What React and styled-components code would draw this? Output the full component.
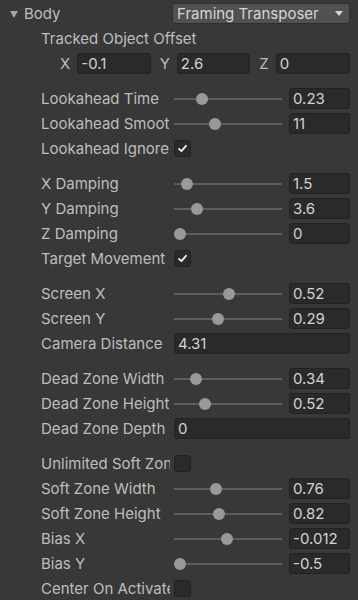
import React from "react";
import styled, { createGlobalStyle } from "styled-components";

const GlobalStyle = createGlobalStyle`
  html, body {
    margin: 0;
    padding: 0;
    background: #383838;
  }
  body {
    font-family: Inter, "Noto Sans", sans-serif;
  }
`;

const Panel = styled.div`
  width: 358px;
  height: 600px;
  overflow: hidden;
  background: #383838;
  padding-top: 1px;
  box-sizing: border-box;
  font-size: 15px;
  color: #bebebe;
`;

const Group = styled.div`
  margin-bottom: ${({ $last }) => ($last ? "0" : "10px")};
`;

const Row = styled.div`
  display: flex;
  align-items: center;
  height: 25px;
  padding-left: ${({ $indent }) => ($indent ? "41px" : "9px")};
  padding-right: 8px;
  box-sizing: border-box;
`;

const Foldout = styled.div`
  display: flex;
  align-items: center;
  width: 163px;
  gap: 6px;
`;

const Arrow = styled.span`
  width: 0;
  height: 0;
  border-left: 4px solid transparent;
  border-right: 4px solid transparent;
  border-top: 7px solid #a5a5a5;
  margin-left: 1px;
  margin-top: 1px;
`;

const Label = styled.div`
  width: 129px;
  margin-right: 4px;
  white-space: nowrap;
  overflow: hidden;
  flex-shrink: 0;
`;

const Dropdown = styled.div`
  flex: 1;
  height: 21px;
  display: flex;
  align-items: center;
  justify-content: space-between;
  padding: 0 6px 0 4px;
  box-sizing: border-box;
  background: #515151;
  border: 1px solid #2f2f2f;
  border-radius: 3px;
  color: #d6d6d6;
`;

const DropArrow = styled.span`
  width: 0;
  height: 0;
  border-left: 4px solid transparent;
  border-right: 4px solid transparent;
  border-top: 5px solid #d6d6d6;
`;

const Field = styled.div`
  height: 21px;
  display: flex;
  align-items: center;
  padding-left: 3px;
  box-sizing: border-box;
  background: #2a2a2a;
  border: 1px solid #222222;
  border-radius: 3px;
  color: #d2d2d2;
  white-space: nowrap;
  overflow: hidden;
  width: ${({ $w }) => ($w ? `${$w}px` : "auto")};
  flex: ${({ $w }) => ($w ? "0 0 auto" : "1")};
`;

const Vector = styled.div`
  display: grid;
  grid-template-columns: repeat(3, 1fr);
  column-gap: 9px;
  flex: 1;
  padding-left: 19px;
`;

const Axis = styled.div`
  display: flex;
  align-items: center;
  gap: 7px;
`;

const SliderBox = styled.div`
  flex: 1;
  display: flex;
  align-items: center;
  gap: 7px;
`;

const Track = styled.div`
  position: relative;
  width: 108px;
  height: 2px;
  background: #5e5e5e;
`;

const Thumb = styled.div`
  position: absolute;
  top: -5px;
  width: 12px;
  height: 12px;
  border-radius: 50%;
  background: #999999;
  left: ${({ $pos }) => `${$pos * 96}px`};
`;

const Check = styled.div`
  width: 15px;
  height: 15px;
  background: #2a2a2a;
  border: 1px solid #222222;
  border-radius: 3px;
  display: flex;
  align-items: center;
  justify-content: center;
`;

const Slider = ({ label, value, pos }) => (
  <Row $indent>
    <Label>{label}</Label>
    <SliderBox>
      <Track>
        <Thumb $pos={pos} />
      </Track>
      <Field $w={61}>{value}</Field>
    </SliderBox>
  </Row>
);

const Toggle = ({ label, checked }) => (
  <Row $indent>
    <Label>{label}</Label>
    <Check>
      {checked && (
        <svg width="11" height="11" viewBox="0 0 11 11">
          <path d="M2 5.8 L4.4 8.2 L9 2.8" fill="none" stroke="#f0f0f0" strokeWidth="1.8" strokeLinecap="round" strokeLinejoin="round" />
        </svg>
      )}
    </Check>
  </Row>
);

const Value = ({ label, value }) => (
  <Row $indent>
    <Label>{label}</Label>
    <Field>{value}</Field>
  </Row>
);

export default function App() {
  return (
    <>
      <GlobalStyle />
      <Panel>
        <Group>
          <Row>
            <Foldout>
              <Arrow />
              Body
            </Foldout>
            <Dropdown>
              Framing Transposer
              <DropArrow />
            </Dropdown>
          </Row>
          <Row $indent>Tracked Object Offset</Row>
          <Row $indent>
            <Vector>
              <Axis>X<Field>-0.1</Field></Axis>
              <Axis>Y<Field>2.6</Field></Axis>
              <Axis>Z<Field>0</Field></Axis>
            </Vector>
          </Row>
        </Group>
        <Group>
          <Slider label="Lookahead Time" value="0.23" pos={0.23} />
          <Slider label="Lookahead Smoothing" value="11" pos={11 / 30} />
          <Toggle label="Lookahead Ignore Y" checked />
        </Group>
        <Group>
          <Slider label="X Damping" value="1.5" pos={1.5 / 20} />
          <Slider label="Y Damping" value="3.6" pos={3.6 / 20} />
          <Slider label="Z Damping" value="0" pos={0} />
          <Toggle label="Target Movement Only" checked />
        </Group>
        <Group>
          <Slider label="Screen X" value="0.52" pos={(0.52 + 0.5) / 2} />
          <Slider label="Screen Y" value="0.29" pos={(0.29 + 0.5) / 2} />
          <Value label="Camera Distance" value="4.31" />
        </Group>
        <Group>
          <Slider label="Dead Zone Width" value="0.34" pos={0.34 / 2} />
          <Slider label="Dead Zone Height" value="0.52" pos={0.52 / 2} />
          <Value label="Dead Zone Depth" value="0" />
        </Group>
        <Group $last>
          <Toggle label="Unlimited Soft Zone" />
          <Slider label="Soft Zone Width" value="0.76" pos={0.76 / 2} />
          <Slider label="Soft Zone Height" value="0.82" pos={0.82 / 2} />
          <Slider label="Bias X" value="-0.012" pos={-0.012 + 0.5} />
          <Slider label="Bias Y" value="-0.5" pos={0} />
          <Toggle label="Center On Activate" />
        </Group>
      </Panel>
    </>
  );
}
